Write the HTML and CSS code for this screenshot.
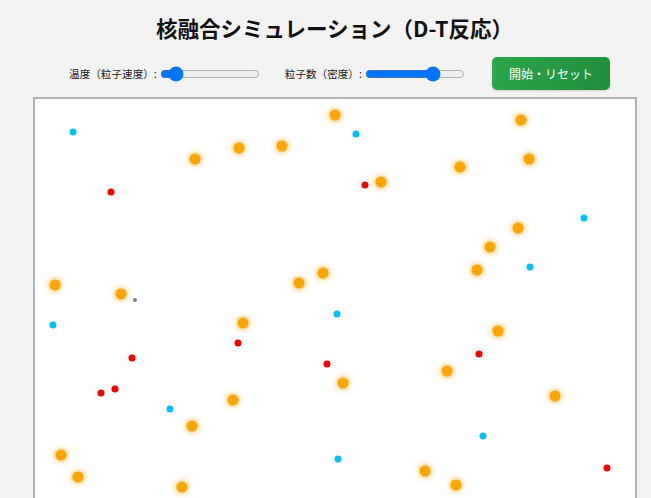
FILE: index.html
```html
<!DOCTYPE html>
<html lang="ja">
<head>
<meta charset="utf-8">
<title>核融合シミュレーション（D-T反応）</title>
<link rel="stylesheet" href="styles.css">
</head>
<body>
<main class="page">
  <h1 class="title">核融合シミュレーション（D-T反応）</h1>
  <div class="controls">
    <label class="control">温度（粒子速度）:<input class="slider" type="range" min="0" max="100" value="10"></label>
    <label class="control">粒子数（密度）:<input class="slider" type="range" min="0" max="100" value="71"></label>
    <button class="btn">開始・リセット</button>
  </div>
  <div class="canvas">
    <svg class="stage" width="600" height="400" viewBox="0 0 600 400">
      <defs>
        <filter id="glow" x="-100%" y="-100%" width="300%" height="300%">
          <feGaussianBlur in="SourceGraphic" stdDeviation="3" result="b"/>
          <feMerge><feMergeNode in="b"/><feMergeNode in="SourceGraphic"/></feMerge>
        </filter>
        <filter id="soft" x="-100%" y="-100%" width="300%" height="300%">
          <feGaussianBlur in="SourceGraphic" stdDeviation="4" result="b"/>
          <feComponentTransfer in="b" result="f"><feFuncA type="linear" slope="0.15"/></feComponentTransfer>
          <feMerge><feMergeNode in="f"/><feMergeNode in="SourceGraphic"/></feMerge>
        </filter>
      </defs>
      <g class="he" fill="#ffa500" filter="url(#glow)">
        <circle cx="300" cy="16" r="5.5"/>
        <circle cx="486" cy="21" r="5.5"/>
        <circle cx="160" cy="60" r="5.5"/>
        <circle cx="204" cy="49" r="5.5"/>
        <circle cx="247" cy="47" r="5.5"/>
        <circle cx="494" cy="60" r="5.5"/>
        <circle cx="425" cy="68" r="5.5"/>
        <circle cx="346" cy="83" r="5.5"/>
        <circle cx="483" cy="129" r="5.5"/>
        <circle cx="455" cy="148" r="5.5"/>
        <circle cx="288" cy="174" r="5.5"/>
        <circle cx="442" cy="171" r="5.5"/>
        <circle cx="264" cy="184" r="5.5"/>
        <circle cx="20" cy="186" r="5.5"/>
        <circle cx="86" cy="195" r="5.5"/>
        <circle cx="208" cy="224" r="5.5"/>
        <circle cx="463" cy="232" r="5.5"/>
        <circle cx="308" cy="284" r="5.5"/>
        <circle cx="412" cy="272" r="5.5"/>
        <circle cx="198" cy="301" r="5.5"/>
        <circle cx="520" cy="297" r="5.5"/>
        <circle cx="157" cy="327" r="5.5"/>
        <circle cx="26" cy="356" r="5.5"/>
        <circle cx="43" cy="378" r="5.5"/>
        <circle cx="390" cy="372" r="5.5"/>
        <circle cx="421" cy="386" r="5.5"/>
        <circle cx="147" cy="388" r="5.5"/>
      </g>
      <g class="d" fill="#00bfff">
        <circle cx="38" cy="33" r="3.5"/>
        <circle cx="321" cy="35" r="3.5"/>
        <circle cx="549" cy="119" r="3.5"/>
        <circle cx="495" cy="168" r="3.5"/>
        <circle cx="302" cy="215" r="3.5"/>
        <circle cx="18" cy="226" r="3.5"/>
        <circle cx="135" cy="310" r="3.5"/>
        <circle cx="448" cy="337" r="3.5"/>
        <circle cx="303" cy="360" r="3.5"/>
      </g>
      <g class="t" fill="#ee0000" filter="url(#soft)">
        <circle cx="76" cy="93" r="3.5"/>
        <circle cx="330" cy="86" r="3.5"/>
        <circle cx="97" cy="259" r="3.5"/>
        <circle cx="203" cy="244" r="3.5"/>
        <circle cx="444" cy="255" r="3.5"/>
        <circle cx="292" cy="265" r="3.5"/>
        <circle cx="80" cy="290" r="3.5"/>
        <circle cx="66" cy="294" r="3.5"/>
        <circle cx="572" cy="369" r="3.5"/>
      </g>
      <circle class="n" cx="100" cy="201" r="2" fill="#808080"/>
    </svg>
  </div>
</main>
</body>
</html>
```
FILE: styles.css
```css
html, body {
  margin: 0;
  padding: 0;
}
body {
  background: #f3f3f3;
  font-family: "Noto Sans CJK JP", "Noto Sans", sans-serif;
  color: #111;
}
.page {
  display: flex;
  flex-direction: column;
  align-items: center;
  padding-left: 19px;
}
.title {
  font-size: 21.5px;
  font-weight: bold;
  line-height: 32px;
  margin: 12px 1px 0 0;
  color: #111;
}
.controls {
  display: flex;
  align-items: center;
  gap: 25px;
  margin: 13px 0 0 9px;
}
.control {
  display: flex;
  align-items: center;
  font-size: 10.6px;
  color: #222;
}
.slider {
  width: 100px;
  margin: 0 0 0 3px;
}
.btn {
  margin-left: 2px;
  height: 33px;
  width: 118px;
  border: none;
  border-radius: 5px;
  background: linear-gradient(90deg, #2ba74a, #218e3c);
  color: #fff;
  font-family: "Noto Sans CJK JP", sans-serif;
  font-size: 12px;
  box-shadow: 0 1px 2px rgba(0,0,0,0.15);
}
.canvas {
  margin-top: 7px;
  border: 2px solid #b3b3b3;
  background: #fff;
  width: 600px;
  height: 400px;
}
.stage {
  display: block;
}
```
